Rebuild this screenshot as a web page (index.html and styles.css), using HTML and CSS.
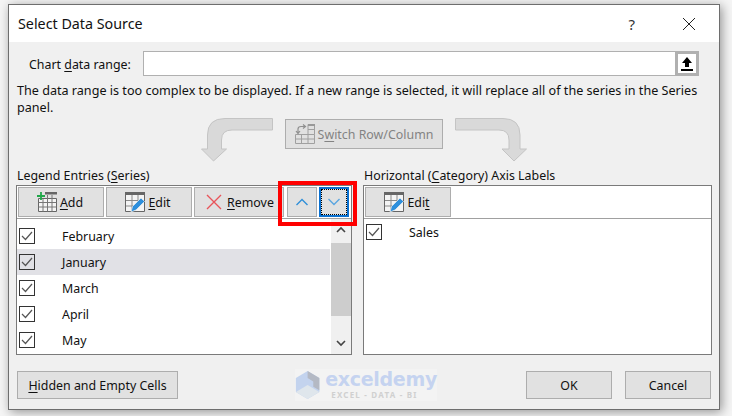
FILE: index.html
```html
<!DOCTYPE html>
<html lang="en">
<head>
<meta charset="utf-8">
<title>Select Data Source</title>
<link rel="stylesheet" href="styles.css">
</head>
<body>
<svg class="defs" width="0" height="0" aria-hidden="true">
  <defs>
    <g id="edit-ico">
      <path d="M.5 2.500h19v17H.5z" fill="#f4f4f4" stroke="#666"/>
      <path d="M0 0h20v3H0z" fill="#666"/>
      <path d="M1 8.500h18M1 14h13M7 3v16M13 3v11" stroke="#8a8a8a" fill="none"/>
      <path d="M6 20l1.500-5.500L16 6l3.500 3.500L11 18z" fill="#2e8fdc" stroke="#f0f0f0" stroke-width=".7"/>
    </g>
  </defs>
</svg>
<main class="dialog">
  <header class="titlebar">
    <span class="title">Select Data Source</span>
    <span class="help">?</span>
    <svg class="close" width="14" height="14" viewBox="0 0 14 14"><path d="M1 1l12 12M13 1L1 13" stroke="#222" fill="none"/></svg>
  </header>
  <div class="content">
    <div class="range-row">
      <label class="range-label">Chart <u>d</u>ata range:</label>
      <div class="range-input">
        <span class="collapse">
          <svg width="12" height="14" viewBox="0 0 12 14"><path d="M6 0L1 6h3v4h4V6h3z" fill="#000"/><path d="M0 12h12v2H0z" fill="#000"/></svg>
        </span>
      </div>
    </div>
    <p class="note">The data range is too complex to be displayed. If a new range is selected, it will replace all of the series in the Series panel.</p>
    <div class="switch-row">
      <svg class="arrow" width="72" height="44" viewBox="0 0 72 44"><path d="M71.500 .5V12H31Q20.500 12 20.500 22V31H25.500L12.500 43 .5 31H6.500V17Q6.500 .5 24 .5z" fill="#d9d9d9" stroke="#c4c4c4"/></svg>
      <button class="btn switch" disabled>
        <svg width="20" height="20" viewBox="0 0 20 20"><path d="M.5 10.500h19v9H.5zM.5 15h19M6.500 10.500v9M13 .5v19M13 5.500h6.500M19.500 .5V10.500M13 .5h6.500" fill="none" stroke="#a0a0a0"/><path d="M13 0h7v2h-7z" fill="#999"/><path d="M3 9V5q0-2.500 3-2.500h4M8 .5l2.500 2L8 4.500M1 7l2 2.500L5 7" fill="none" stroke="#8f8f8f" stroke-width="1.200"/></svg>
        <span>S<u>w</u>itch Row/Column</span>
      </button>
      <svg class="arrow" width="72" height="44" viewBox="0 0 72 44"><path d="M.5 .5V12H44Q54 12 54 22V31H47L59 43 71.500 31H65V17Q65 .5 48 .5z" fill="#d9d9d9" stroke="#c4c4c4"/></svg>
    </div>
    <div class="columns">
      <section class="col-left">
        <div class="col-label">Legend Entries (<u>S</u>eries)</div>
        <div class="panel">
          <div class="toolbar">
            <button class="btn tool w86 shift">
              <svg width="20" height="20" viewBox="0 0 20 20"><path d="M1.500 6.500h18v13h-18z" fill="#f4f4f4" stroke="#666"/><path d="M8 0h12v2.500H8z" fill="#666"/><path d="M1.500 10.500h18M1.500 15h18M6 7v12.500M10.500 3v16.500M15 3v16.500" stroke="#777" fill="none"/><path d="M0 4h8M4 0v8" stroke="#21a84a" stroke-width="1.800" fill="none"/></svg>
              <span><u>A</u>dd</span>
            </button>
            <button class="btn tool w86 shift">
              <svg width="20" height="20" viewBox="0 0 20 20"><use href="#edit-ico"/></svg>
              <span><u>E</u>dit</span>
            </button>
            <button class="btn tool w90 remove">
              <svg width="16" height="16" viewBox="0 0 16 16"><path d="M1 1l14 14M15 1L1 15" stroke="#e8555a" stroke-width="1.400" fill="none"/></svg>
              <span><u>R</u>emove</span>
            </button>
            <button class="btn tool arrow-btn">
              <svg width="14" height="8" viewBox="0 0 14 8"><path d="M1.500 7l5.500-5.500L12.500 7" stroke="#2f8fd8" stroke-width="1.400" fill="none"/></svg>
            </button>
            <button class="btn tool arrow-btn focused">
              <svg width="14" height="8" viewBox="0 0 14 8"><path d="M1.500 1l5.500 5.500L12.500 1" stroke="#5aa5e0" stroke-width="1.400" fill="none"/></svg>
            </button>
            <span class="highlight"></span>
          </div>
          <div class="list-wrap">
            <ul class="list">
              <li class="item"><span class="check"><svg width="16" height="16" viewBox="0 0 16 16"><path d="M3 8l3.500 3.500L13 4" stroke="#555" stroke-width="1.200" fill="none"/></svg></span><span>February</span></li>
              <li class="item selected"><span class="check"><svg width="16" height="16" viewBox="0 0 16 16"><path d="M3 8l3.500 3.500L13 4" stroke="#555" stroke-width="1.200" fill="none"/></svg></span><span>January</span></li>
              <li class="item"><span class="check"><svg width="16" height="16" viewBox="0 0 16 16"><path d="M3 8l3.500 3.500L13 4" stroke="#555" stroke-width="1.200" fill="none"/></svg></span><span>March</span></li>
              <li class="item"><span class="check"><svg width="16" height="16" viewBox="0 0 16 16"><path d="M3 8l3.500 3.500L13 4" stroke="#555" stroke-width="1.200" fill="none"/></svg></span><span>April</span></li>
              <li class="item"><span class="check"><svg width="16" height="16" viewBox="0 0 16 16"><path d="M3 8l3.500 3.500L13 4" stroke="#555" stroke-width="1.200" fill="none"/></svg></span><span>May</span></li>
            </ul>
            <div class="scrollbar">
              <svg class="sb-arrow" width="10" height="7" viewBox="0 0 10 7"><path d="M1 6l4-4 4 4" stroke="#444" stroke-width="1.600" fill="none"/></svg>
              <div class="thumb"></div>
              <svg class="sb-arrow" width="10" height="7" viewBox="0 0 10 7"><path d="M1 1l4 4 4-4" stroke="#444" stroke-width="1.600" fill="none"/></svg>
            </div>
          </div>
        </div>
      </section>
      <section class="col-right">
        <div class="col-label">Horizontal (<u>C</u>ategory) Axis Labels</div>
        <div class="panel">
          <div class="toolbar">
            <button class="btn tool w86 shift">
              <svg width="20" height="20" viewBox="0 0 20 20"><use href="#edit-ico"/></svg>
              <span>Edi<u>t</u></span>
            </button>
          </div>
          <ul class="list">
            <li class="item"><span class="check"><svg width="16" height="16" viewBox="0 0 16 16"><path d="M3 8l3.500 3.500L13 4" stroke="#555" stroke-width="1.200" fill="none"/></svg></span><span>Sales</span></li>
          </ul>
        </div>
      </section>
    </div>
    <footer class="footer">
      <button class="btn hidden-btn"><u>H</u>idden and Empty Cells</button>
      <div class="watermark">
        <svg width="29" height="32" viewBox="0 0 29 32"><path d="M14.500 0L28 8v16l-13.500 8L1 24V8z" fill="#c3d3ee"/><path d="M14.500 0L28 8v14l-7-4v-6l-6.500-4z" fill="#b4b9c4"/><path d="M1 24l13.500-8L28 24l-13.500 8z" fill="#dfe6ec"/></svg>
        <div class="wm-text">
          <span class="wm-name">exceldemy</span>
          <span class="wm-sub">EXCEL - DATA - BI</span>
        </div>
      </div>
      <div class="actions">
        <button class="btn action">OK</button>
        <button class="btn action">Cancel</button>
      </div>
    </footer>
  </div>
</main>
</body>
</html>
```

FILE: styles.css
```css
* { box-sizing: border-box; }
html, body { margin: 0; height: 416px; overflow: hidden; }
body { background: #f5f5f5; padding: 4px 12px 0 8px; font-family: "Noto Sans", "Open Sans", sans-serif; font-size: 12.4px; color: #111; }
.defs { position: absolute; }
u { text-underline-offset: 2px; }
.dialog { width: 712px; height: 406px; border: 1px solid #6e6e6e; background: #f0f0f0; box-shadow: 2px 2px 10px rgba(0,0,0,.4); display: flex; flex-direction: column; }
.titlebar { height: 37px; background: #fff; display: flex; align-items: center; padding: 0 23px 0 9px; flex: none; }
.title { font-size: 14.3px; flex: 1; }
.help { font-size: 15px; margin-right: 47px; color: #333; }
.close { display: block; }
.content { flex: 1; display: flex; flex-direction: column; padding: 9px 7px 9px 7px; }
.range-row { display: flex; align-items: center; height: 25px; padding-left: 13px; }
.range-label { width: 114px; flex: none; padding-top: 1px; }
.range-input { width: 556px; height: 25px; background: #fff; border: 1px solid #b0b0b0; display: flex; justify-content: flex-end; margin-right: 2px; }
.collapse { width: 24px; height: 25px; margin: -1px -1px 0 0; border: 3px solid #b0b0b0; background: #fff; display: flex; align-items: center; justify-content: center; flex: none; }
.note { margin: 6px 0 0 1px; width: 686px; line-height: 17px; height: 34px; font-size: 12.6px; }
.btn { font: inherit; color: #111; background: #e1e1e1; border: 1px solid #adadad; padding: 0; display: flex; align-items: center; justify-content: center; }
.switch-row { display: flex; align-items: flex-start; height: 44px; margin-top: 2px; padding-left: 185px; gap: 12px; }
.switch { width: 158px; height: 30px; color: #838383; gap: 3px; margin-top: 1px; }
.switch u { text-decoration-color: #838383; }
.columns { display: flex; gap: 11px; margin-top: 5px; }
.col-left { width: 336px; }
.col-right { width: 349px; }
.col-label { height: 16px; line-height: 18px; margin-bottom: 2px; padding-left: 1px; }
.panel { height: 170px; border: 1px solid #7a7a7a; background: #fff; }
.toolbar { height: 33px; padding: 1px; background: #fff; border-bottom: 1px solid #a0a0a0; display: flex; gap: 2px; position: relative; }
.tool { height: 30px; gap: 3px; flex: none; }
.shift { padding-right: 2px; }
.remove { gap: 5px; padding-left: 2px; }
.w86 { width: 86px; }
.w90 { width: 90px; }
.arrow-btn { width: 30px; }
.w90 + .arrow-btn { margin-left: 1px; }
.focused { border: 2px solid #0a70d0; position: relative; }
.focused::after { content: ""; position: absolute; inset: 0; border: 1px dotted #000; }
.highlight { position: absolute; left: 261px; top: -5px; width: 79px; height: 45px; border: 4px solid #f00; }
.list-wrap { display: flex; height: 135px; }
.list { list-style: none; margin: 0; padding: 4px 0 0; flex: 1; }
.item { height: 26px; display: flex; align-items: center; padding-left: 2px; }
.item.selected { background: #e1e1e6; }
.col-right .list { padding-top: 0; }
.check { width: 16px; height: 16px; border: 1px solid #333; display: flex; align-items: center; justify-content: center; margin-right: 27px; flex: none; }
.check svg { flex: none; }
.scrollbar { width: 20px; margin-left: 1px; background: #f0f0f0; display: flex; flex-direction: column; align-items: center; }
.sb-arrow { flex: none; margin: 7px 0; }
.thumb { width: 100%; height: 73px; background: #cdcdcd; margin: 3px 0 auto; }
.footer { display: flex; align-items: flex-start; margin-top: 16px; position: relative; }
.hidden-btn { width: 161px; height: 28px; margin-left: 1px; }
.watermark { display: flex; align-items: center; gap: 5px; margin-left: 117px; margin-top: -2px; width: 142px; height: 32px; background: #f3f3f3; }
.wm-text { display: flex; flex-direction: column; }
.wm-name { font-family: "DejaVu Sans", sans-serif; font-weight: 700; font-size: 19px; color: #c5d3f0; height: 19px; line-height: 19px; letter-spacing: -.3px; }
.wm-sub { font-size: 8px; font-weight: 700; letter-spacing: 1.200px; color: #d0d0d0; padding-left: 6px; height: 11px; line-height: 11px; }
.actions { display: flex; gap: 13px; margin-left: auto; margin-right: 1px; }
.action { width: 86px; height: 28px; }
```
